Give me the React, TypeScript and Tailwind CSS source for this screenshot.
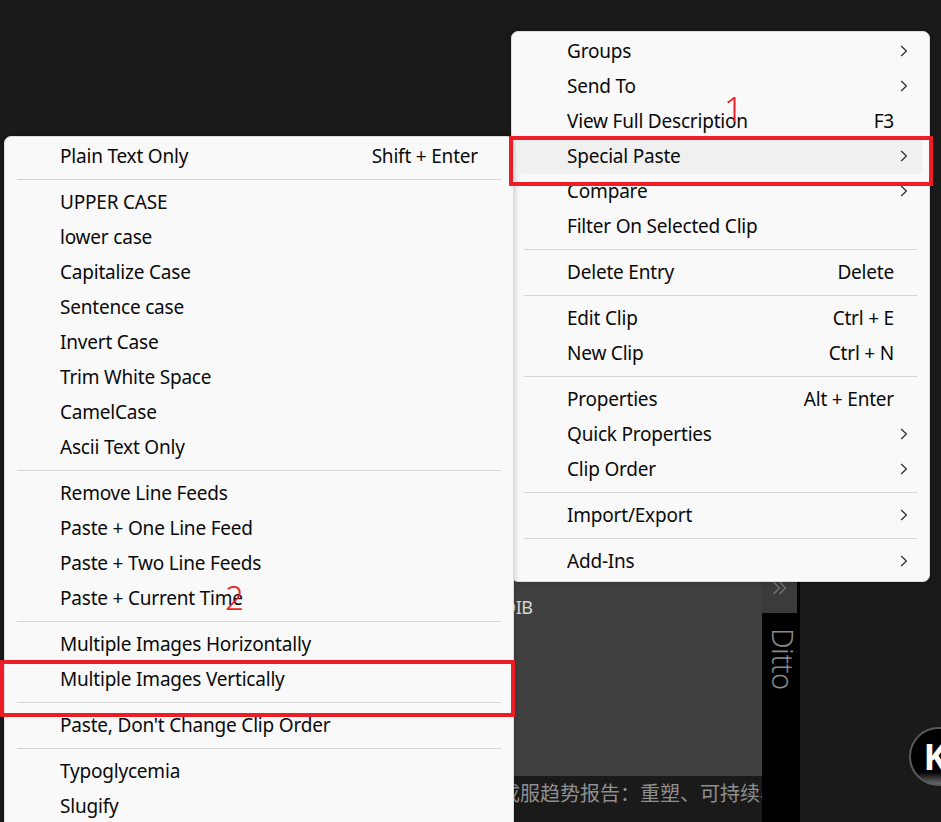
const FONT = "font-['Noto_Sans','Noto_Sans_CJK_SC',sans-serif]";

type Item =
  | { sep: true }
  | { label: string; shortcut?: string; arrow?: boolean; active?: boolean; sep?: false };

const rightMenu: Item[] = [
  { label: "Groups", arrow: true },
  { label: "Send To", arrow: true },
  { label: "View Full Description", shortcut: "F3" },
  { label: "Special Paste", arrow: true, active: true },
  { label: "Compare", arrow: true },
  { label: "Filter On Selected Clip" },
  { sep: true },
  { label: "Delete Entry", shortcut: "Delete" },
  { sep: true },
  { label: "Edit Clip", shortcut: "Ctrl + E" },
  { label: "New Clip", shortcut: "Ctrl + N" },
  { sep: true },
  { label: "Properties", shortcut: "Alt + Enter" },
  { label: "Quick Properties", arrow: true },
  { label: "Clip Order", arrow: true },
  { sep: true },
  { label: "Import/Export", arrow: true },
  { sep: true },
  { label: "Add-Ins", arrow: true },
];

const leftMenu: Item[] = [
  { label: "Plain Text Only", shortcut: "Shift + Enter" },
  { sep: true },
  { label: "UPPER CASE" },
  { label: "lower case" },
  { label: "Capitalize Case" },
  { label: "Sentence case" },
  { label: "Invert Case" },
  { label: "Trim White Space" },
  { label: "CamelCase" },
  { label: "Ascii Text Only" },
  { sep: true },
  { label: "Remove Line Feeds" },
  { label: "Paste + One Line Feed" },
  { label: "Paste + Two Line Feeds" },
  { label: "Paste + Current Time" },
  { sep: true },
  { label: "Multiple Images Horizontally" },
  { label: "Multiple Images Vertically" },
  { sep: true },
  { label: "Paste, Don't Change Clip Order" },
  { sep: true },
  { label: "Typoglycemia" },
  { label: "Slugify" },
];

function Chevron() {
  return (
    <svg width="8" height="12" viewBox="0 0 8 12" fill="none" className="absolute right-[14px] top-[11px]">
      <path d="M1.2 1 L6.4 6 L1.2 11" stroke="#2a2a2a" strokeWidth="1.2" />
    </svg>
  );
}

function Menu({ items, className }: { items: Item[]; className: string }) {
  return (
    <div
      className={`absolute overflow-hidden rounded-[7px] border border-[#dcdcdc] bg-[#f9f9f9] py-[2px] px-[7px] shadow-[0_0_6px_rgba(0,0,0,0.25)] ${className}`}
    >
      {items.map((item, i) =>
        item.sep ? (
          <div key={i} className="flex h-[11px] items-center px-[5px]">
            <div className="h-px w-full bg-[#d6d6d6]" />
          </div>
        ) : (
          <div
            key={i}
            className={`relative flex h-[35px] items-center justify-between rounded-[4px] pl-[48px] pr-[28px] text-[19px] tracking-[-0.2px] text-[#0a0a0a] ${
              item.active ? "bg-[#f0f0f0]" : ""
            }`}
          >
            <span>{item.label}</span>
            {item.shortcut && <span>{item.shortcut}</span>}
            {item.arrow && <Chevron />}
          </div>
        ),
      )}
    </div>
  );
}

export default function App() {
  return (
    <div className={`relative h-[822px] w-[941px] overflow-hidden bg-[#1a1a1a] ${FONT}`}>
      {/* Ditto window behind the menus */}
      <div className="absolute left-[460px] top-[560px] bottom-0 flex w-[340px]">
        <div className="flex min-w-0 flex-1 flex-col">
          <div className="h-[216px] bg-[#404040] pl-[43px] pt-[36px] text-[18px] leading-[22px] tracking-[-0.5px] text-[#d8d8d8]">
            DIB
          </div>
          <div className="overflow-hidden whitespace-nowrap pt-[5px] text-[20px] leading-[26px] text-[#8f8f8f]">
            全球成服趋势报告：重塑、可持续与未来
          </div>
        </div>
        <div className="flex w-[38px] flex-col bg-black">
          <div className="flex h-[53px] w-[35px] items-end justify-center bg-[#3b3b3b] pb-[18px]">
            <svg width="16" height="14" viewBox="0 0 16 14" fill="none">
              <path d="M1.5 1 L7.5 7 L1.5 13 M7.5 1 L13.5 7 L7.5 13" stroke="#777777" strokeWidth="1.2" />
            </svg>
          </div>
          <div className="pl-[2px] pt-[15px] text-[29px] leading-[34px] font-light tracking-[-0.5px] text-[#8a8a8a] [writing-mode:vertical-rl]">
            Ditto
          </div>
        </div>
      </div>

      {/* Corner badge */}
      <div className="absolute left-[909px] top-[727px] flex h-[59px] w-[59px] items-center justify-center rounded-full border-2 border-[#5a5a5a] bg-[linear-gradient(to_bottom,#000_78%,#6a6a6a)] pr-[6px] text-[36px] font-bold text-white">
        K
      </div>

      <Menu items={rightMenu} className="left-[511px] top-[31px] w-[419px]" />
      <Menu items={leftMenu} className="left-[4px] top-[136px] h-[720px] w-[510px]" />

      {/* Annotations */}
      <div className="absolute left-[509px] top-[136px] h-[50px] w-[424px] rounded-[1px] border-[4px] border-[#ee1c25]" />
      <div className="absolute left-0 top-[660px] h-[57px] w-[515px] rounded-[1px] border-[4px] border-[#ee1c25]" />
      <div className="absolute left-[724px] top-[89px] text-[34px] leading-[40px] font-light text-[#ee1c25]">1</div>
      <div className="absolute left-[225px] top-[578px] text-[33px] leading-[40px] font-light text-[#ee1c25]">2</div>
    </div>
  );
}
